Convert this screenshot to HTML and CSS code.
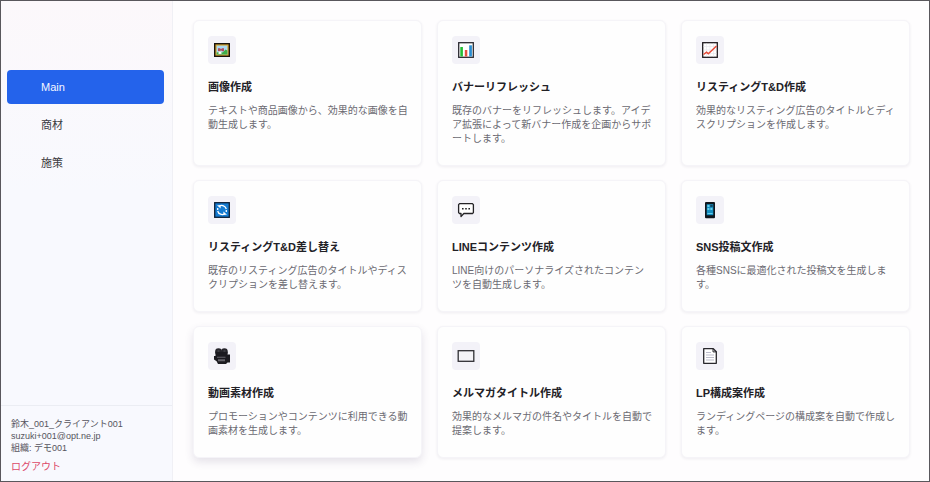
FILE: index.html
```html
<!DOCTYPE html>
<html lang="ja">
<head>
<meta charset="utf-8">
<meta name="viewport" content="width=device-width, initial-scale=1">
<title>Main</title>
<link rel="stylesheet" href="styles.css">
</head>
<body>
<div class="app">
  <aside class="sidebar">
    <nav class="nav">
      <a class="nav-item active" href="#main">Main</a>
      <a class="nav-item" href="#products">商材</a>
      <a class="nav-item" href="#measures">施策</a>
    </nav>
    <footer class="account">
      <div>鈴木_001_クライアント001</div>
      <div>suzuki+001@opt.ne.jp</div>
      <div>組織: デモ001</div>
      <a class="logout" href="#logout">ログアウト</a>
    </footer>
  </aside>
  <main class="cards">
    <article class="card">
      <div class="icon"><svg viewBox="0 0 18 18"><rect x="1.7" y="2.7" width="14.6" height="12.6" fill="#d8a62f" stroke="#17130d" stroke-width="1.4"/><rect x="3.6" y="4.6" width="10.8" height="8.8" fill="#a9d8f2"/><path d="M3.6 13.4v-2l4-1 2 1 3-3 1.8 1v4z" fill="#3fae49"/><path d="M5 7.2h2l1 1 1-1h2v3H9l-1-1-1 1H5z" fill="#b34c5c"/><path d="M5.5 10.5h3v2.4h-3z" fill="#fff"/></svg></div>
      <h2>画像作成</h2>
      <p>テキストや商品画像から、効果的な画像を自動生成します。</p>
    </article>
    <article class="card">
      <div class="icon"><svg viewBox="0 0 18 18"><rect x="1.7" y="1.7" width="14.6" height="14.6" fill="#fff" stroke="#292830" stroke-width="1.3"/><path d="M3.3 6h2.6v9.5H3.3z" fill="#23bd35"/><path d="M7.8 9h2.5v6.5H7.8z" fill="#e25242"/><path d="M12.2 4.3h2.7v11.2h-2.7z" fill="#278bd0"/></svg></div>
      <h2>バナーリフレッシュ</h2>
      <p>既存のバナーをリフレッシュします。アイデア拡張によって新バナー作成を企画からサポートします。</p>
    </article>
    <article class="card">
      <div class="icon"><svg viewBox="0 0 18 18"><rect x="1.7" y="1.7" width="14.6" height="14.6" fill="#fff" stroke="#201c20" stroke-width="1.3"/><path d="M2.5 5.5h13M2.5 9h13M2.5 12.5h13M5.5 2.5v13M9 2.5v13M12.5 2.5v13" stroke="#e5e4eb" stroke-width=".6"/><path d="M2.5 13.5l3-2.3 1.8 1.5L15.5 5" fill="none" stroke="#e64b38" stroke-width="1.5"/></svg></div>
      <h2>リスティングT&amp;D作成</h2>
      <p>効果的なリスティング広告のタイトルとディスクリプションを作成します。</p>
    </article>
    <article class="card">
      <div class="icon"><svg viewBox="0 0 18 18"><rect x="1.7" y="1.7" width="14.6" height="14.6" fill="#147bd1" stroke="#0c2038" stroke-width="1.3"/><path d="M6.2 5.3A4.6 4.6 0 0 1 13.3 8M11.8 12.7A4.6 4.6 0 0 1 4.7 10M4.7 9V7M13.3 9v2" fill="none" stroke="#fff" stroke-width="1.3"/><path d="M4 4.2h3.6v3.4zM14 13.8h-3.6v-3.4z" fill="#fff"/></svg></div>
      <h2>リスティングT&amp;D差し替え</h2>
      <p>既存のリスティング広告のタイトルやディスクリプションを差し替えます。</p>
    </article>
    <article class="card">
      <div class="icon"><svg viewBox="0 0 18 18"><path d="M2.5 2.7h13l.9.9v8l-.9.9H6.8L4 15.6v-3.1H2.5l-.9-.9v-8z" fill="#fff" stroke="#242326" stroke-width="1.3" stroke-linejoin="round"/><path d="M5 7h1.6v1.6H5zM8.2 7h1.6v1.6H8.2zM11.4 7H13v1.6h-1.6z" fill="#242326"/></svg></div>
      <h2>LINEコンテンツ作成</h2>
      <p>LINE向けのパーソナライズされたコンテンツを自動生成します。</p>
    </article>
    <article class="card">
      <div class="icon"><svg viewBox="0 0 18 18"><rect x="4" y="1" width="10" height="16.3" rx="1" fill="#10161d"/><path d="M5.7 3.2h6.6v11H5.7z" fill="#168fc2"/><path d="M6.4 4h2v2h-2zM6.4 7h2v2h-2zM9.4 7h2v2h-2zM6.4 12h5.2v1H6.4z" fill="#69cfea"/><path d="M9.3 3.9h2.4v2H9.3z" fill="#17465f"/></svg></div>
      <h2>SNS投稿文作成</h2>
      <p>各種SNSに最適化された投稿文を生成します。</p>
    </article>
    <article class="card raised">
      <div class="icon"><svg viewBox="0 0 18 18"><circle cx="5.5" cy="4.7" r="3.4" fill="#25242a"/><circle cx="11.4" cy="4.7" r="3.4" fill="#25242a"/><path d="M2.5 5h12v2.5H17v8h-2.5L13 17H5l-1.4-2.7L1 12.5V9h1.5z" fill="#1b1a20"/><path d="M4 9.7h8.5v1H4zM5 12.2h7v2H5z" fill="#65636b"/><path d="M4.5 3.6h2v1h-2zM10.5 3.6h2v1h-2z" fill="#55535b"/></svg></div>
      <h2>動画素材作成</h2>
      <p>プロモーションやコンテンツに利用できる動画素材を生成します。</p>
    </article>
    <article class="card">
      <div class="icon"><svg viewBox="0 0 18 18"><rect x="1.2" y="3.7" width="15.6" height="10.6" fill="#f4f3f7" stroke="#302f34" stroke-width="1.3"/></svg></div>
      <h2>メルマガタイトル作成</h2>
      <p>効果的なメルマガの件名やタイトルを自動で提案します。</p>
    </article>
    <article class="card">
      <div class="icon"><svg viewBox="0 0 18 18"><path d="M2.7 1.7h9.6l3 3v11.6H2.7z" fill="#fff" stroke="#28272c" stroke-width="1.3" stroke-linejoin="round"/><path d="M12 1.7v3.2h3.3" fill="none" stroke="#28272c"/><path d="M5 5.5h5M5 8h8M5 10.5h8M5 13h8" stroke="#b6b5c6" stroke-width=".9"/></svg></div>
      <h2>LP構成案作成</h2>
      <p>ランディングページの構成案を自動で作成します。</p>
    </article>
  </main>
</div>
</body>
</html>
```
FILE: styles.css
```css
* { box-sizing: border-box; }

body {
  margin: 0;
  font-family: "Liberation Sans", "Noto Sans CJK JP", sans-serif;
  color: #222126;
}

.app {
  display: flex;
  min-height: 100vh;
  border: 1px solid #59575c;
  background: #fefdfe;
}

.sidebar {
  display: flex;
  flex: 0 0 172px;
  flex-direction: column;
  border-right: 1px solid #f0f0f5;
  background: linear-gradient(#fcf8fb, #f8f9fe 40%);
}

.nav {
  display: flex;
  flex: 1;
  flex-direction: column;
  gap: 4px;
  padding: 69px 8px 0 6px;
}

.nav-item {
  padding: 0 34px;
  border-radius: 4px;
  color: #3b3a40;
  font-size: 11px;
  line-height: 34px;
  text-decoration: none;
}

.nav-item.active {
  background: #2463eb;
  color: #f4f7ff;
}

.account {
  padding: 12px 10px 8px;
  border-top: 1px solid #ebedf3;
  color: #55545d;
  font-size: 9px;
  line-height: 12px;
}

.logout {
  display: block;
  margin-top: 6px;
  color: #dc4868;
  font-size: 10px;
  line-height: 13px;
  text-decoration: none;
}

.cards {
  display: grid;
  flex: 1;
  grid-template-columns: repeat(3, minmax(0, 1fr));
  align-content: start;
  gap: 14px 15px;
  padding: 19px 19px 16px 20px;
}

.card {
  padding: 15px 12px 19px 14px;
  border: 1px solid #f5f4f8;
  border-radius: 6px;
  background: #fefefe;
  box-shadow: 0 1px 3px rgba(60, 50, 90, 0.08);
}

.card.raised {
  box-shadow: 0 4px 9px rgba(60, 50, 90, 0.13);
}

.icon {
  display: grid;
  place-items: center;
  width: 28px;
  height: 28px;
  border-radius: 4px;
  background: #f3f2f8;
}

.icon svg {
  width: 18px;
  height: 18px;
}

.card h2 {
  margin: 14px 0 8px;
  font-size: 11px;
  line-height: 18px;
}

.card p {
  margin: 0;
  color: #6b6a72;
  font-size: 10px;
  line-break: loose;
  line-height: 14px;
}
```
